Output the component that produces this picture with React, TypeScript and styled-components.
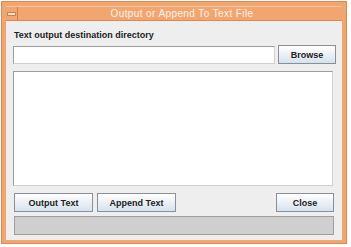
import React from "react";
import styled, { createGlobalStyle } from "styled-components";

const GlobalStyle = createGlobalStyle`
  html, body {
    margin: 0;
    padding: 0;
    background: #ffffff;
    font-family: "Liberation Sans", Arial, sans-serif;
  }
`;

const Frame = styled.div`
  width: 346px;
  height: 243px;
  margin: 1px 0 0 1px;
  box-sizing: border-box;
  background: #f1a56f;
  border: 1px solid #d98a55;
  padding: 4px;
  display: flex;
  flex-direction: column;
`;

const TitleBar = styled.div`
  height: 15px;
  display: flex;
  align-items: center;
  background: #f2a56e;
  border-top: 1px solid #f7c7a3;
  border-bottom: 1px solid #d98a55;
  box-sizing: border-box;
`;

const MinButton = styled.div`
  width: 12px;
  height: 13px;
  box-sizing: border-box;
  border-right: 1px solid #c9814f;
  display: flex;
  align-items: center;
  justify-content: center;

  &::after {
    content: "";
    width: 7px;
    height: 2px;
    background: #fbe3cf;
    border: 1px solid #c9814f;
  }
`;

const Title = styled.div`
  flex: 1;
  text-align: center;
  color: #fff4ea;
  font-size: 10px;
  letter-spacing: 0.4px;
  padding-left: 4px;
`;

const Body = styled.div`
  flex: 1;
  background: #eeeeee;
  padding: 8px 6px 5px 7px;
  display: flex;
  flex-direction: column;
`;

const Label = styled.div`
  font-size: 9px;
  font-weight: bold;
  color: #222222;
  padding-left: 1px;
  height: 12px;
  line-height: 12px;
`;

const Row = styled.div<{
  $spread?: boolean;
  $top?: number;
  $right?: number;
  $left?: number;
  $gap?: number;
}>`
  display: flex;
  align-items: center;
  gap: ${(p) => p.$gap ?? 3}px;
  margin: ${(p) => `${p.$top ?? 0}px ${p.$right ?? 0}px 0 ${p.$left ?? 0}px`};
  justify-content: ${(p) => (p.$spread ? "space-between" : "flex-start")};
`;

const Field = styled.div`
  flex: 1;
  height: 18px;
  box-sizing: border-box;
  background: #ffffff;
  border: 1px solid #9e9e9e;
  border-right-color: #d0d0d0;
  border-bottom-color: #d0d0d0;
`;

const Button = styled.button<{ $w: number }>`
  width: ${(p) => p.$w}px;
  height: 19px;
  box-sizing: border-box;
  padding: 0;
  border: 1px solid #8a8f98;
  background: linear-gradient(#ffffff 0%, #eef2f6 45%, #d4e2ee 100%);
  font-family: "Liberation Sans", Arial, sans-serif;
  font-size: 9px;
  font-weight: bold;
  color: #222222;
`;

const TextArea = styled.div`
  height: 115px;
  margin: 7px 3px 7px 0;
  box-sizing: border-box;
  background: #ffffff;
  border: 1px solid #9e9e9e;
  border-right-color: #d0d0d0;
  border-bottom-color: #d0d0d0;
`;

const Progress = styled.div`
  height: 19px;
  margin: 4px 2px 0 1px;
  box-sizing: border-box;
  background: #cfcfcf;
  border: 1px solid #9e9e9e;
`;

export default function App() {
  return (
    <>
      <GlobalStyle />
      <Frame>
        <TitleBar>
          <MinButton />
          <Title>Output or Append To Text File</Title>
        </TitleBar>
        <Body>
          <Label>Text output destination directory</Label>
          <Row $top={4}>
            <Field />
            <Button $w={58}>Browse</Button>
          </Row>
          <TextArea />
          <Row $spread $right={2} $left={1}>
            <Row $gap={4}>
              <Button $w={79}>Output Text</Button>
              <Button $w={79}>Append Text</Button>
            </Row>
            <Button $w={58}>Close</Button>
          </Row>
          <Progress />
        </Body>
      </Frame>
    </>
  );
}
